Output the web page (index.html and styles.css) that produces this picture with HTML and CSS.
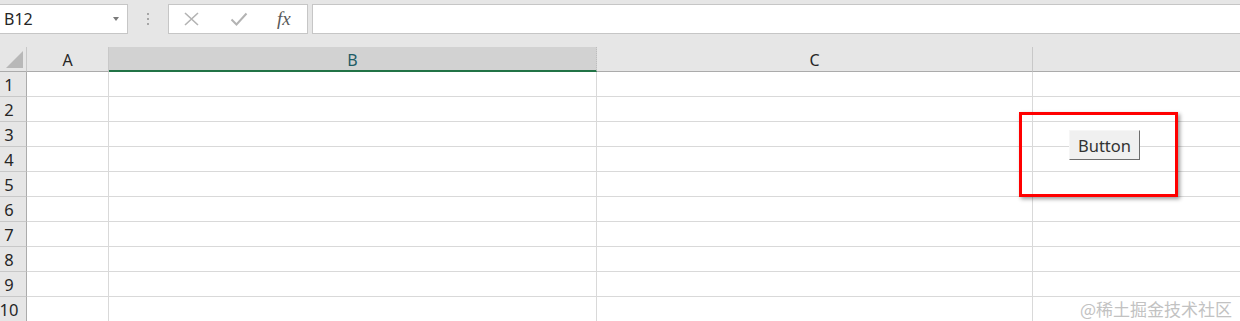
FILE: index.html
```html
<!DOCTYPE html>
<html>

<head>
    <meta name="viewport" content="width=device-width, initial-scale=1">
    <title>Sheet</title>
    <link rel="stylesheet" href="styles.css">
</head>

<body>
    <div class="toolbar">
        <div class="name-box">
            <span class="name-text">B12</span>
            <span class="name-arrow"></span>
        </div>
        <div class="grip">
            <i></i><i></i><i></i>
        </div>
        <div class="fx-box">
            <svg class="fx-icon" width="18" height="14" viewBox="0 0 18 14">
                <path d="M2 1 L15 13 M15 1 L2 13" stroke="#b3b3b3" stroke-width="1.6" fill="none" />
            </svg>
            <svg class="fx-icon" width="18" height="14" viewBox="0 0 18 14">
                <path d="M1.5 7.5 L6.5 12.5 L16.5 1.5" stroke="#b3b3b3" stroke-width="2" fill="none" />
            </svg>
            <span class="fx-label">fx</span>
        </div>
        <div class="formula-input"></div>
    </div>

    <div class="sheet">
        <div class="corner"><span class="corner-mark"></span></div>
        <div class="col-head">A</div>
        <div class="col-head selected">B</div>
        <div class="col-head">C</div>
        <div class="col-head last"></div>

        <div class="row-head">1</div><div class="cell"></div><div class="cell"></div><div class="cell"></div><div class="cell last"></div>
        <div class="row-head">2</div><div class="cell"></div><div class="cell"></div><div class="cell"></div><div class="cell last"></div>
        <div class="row-head">3</div><div class="cell"></div><div class="cell"></div><div class="cell"></div><div class="cell last"></div>
        <div class="row-head">4</div><div class="cell"></div><div class="cell"></div><div class="cell"></div><div class="cell last"></div>
        <div class="row-head">5</div><div class="cell"></div><div class="cell"></div><div class="cell"></div><div class="cell last"></div>
        <div class="row-head">6</div><div class="cell"></div><div class="cell"></div><div class="cell"></div><div class="cell last"></div>
        <div class="row-head">7</div><div class="cell"></div><div class="cell"></div><div class="cell"></div><div class="cell last"></div>
        <div class="row-head">8</div><div class="cell"></div><div class="cell"></div><div class="cell"></div><div class="cell last"></div>
        <div class="row-head">9</div><div class="cell"></div><div class="cell"></div><div class="cell"></div><div class="cell last"></div>
        <div class="row-head">10</div><div class="cell"></div><div class="cell"></div><div class="cell"></div><div class="cell last"></div>
    </div>

    <!-- floating shape over the cells -->
    <div class="highlight">
        <button class="sheet-button" type="button">Button</button>
    </div>

    <div class="watermark">@稀土掘金技术社区</div>
</body>

</html>
```

FILE: styles.css
```css
* {
    box-sizing: border-box;
}

body {
    margin: 0;
    overflow: hidden;
    position: relative;
    width: 1240px;
    height: 321px;
    background: #ffffff;
    font-family: "Noto Sans", "Open Sans", sans-serif;
    color: #262626;
}

.toolbar {
    display: flex;
    align-items: flex-start;
    height: 47px;
    padding-top: 4px;
    background: #e6e6e6;
}

.name-box {
    display: flex;
    align-items: center;
    justify-content: space-between;
    width: 128px;
    height: 30px;
    padding: 0 8px 0 4px;
    background: #ffffff;
    border: 1px solid #c6c6c6;
    border-left: none;
}

.name-text {
    font-size: 16px;
    color: #262626;
}

.name-arrow {
    width: 0;
    height: 0;
    border-left: 3.5px solid transparent;
    border-right: 3.5px solid transparent;
    border-top: 4px solid #7a7a7a;
}

.grip {
    display: flex;
    flex-direction: column;
    align-items: center;
    justify-content: center;
    gap: 3px;
    width: 40px;
    height: 30px;
}

.grip i {
    display: block;
    width: 2px;
    height: 2px;
    background: #a6a6a6;
}

.fx-box {
    display: flex;
    align-items: center;
    width: 140px;
    height: 30px;
    padding-left: 14px;
    gap: 29px;
    background: #ffffff;
    border: 1px solid #c6c6c6;
}

.fx-label {
    font-family: "Liberation Serif", "DejaVu Serif", serif;
    font-style: italic;
    font-size: 19px;
    color: #5a5a5a;
    margin-left: 0;
}

.formula-input {
    flex: 1;
    height: 30px;
    margin-left: 4px;
    background: #ffffff;
    border: 1px solid #c6c6c6;
    border-right: none;
}

.sheet {
    display: grid;
    grid-template-columns: 27px 82px 488px 436px 1fr;
    grid-auto-rows: 25px;
    height: 274px;
    overflow: hidden;
}

.corner {
    position: relative;
    background: #e6e6e6;
    border-right: 1px solid #c8c8c8;
    border-bottom: 1px solid #ababab;
}

.corner-mark {
    position: absolute;
    right: 3px;
    bottom: 3px;
    width: 0;
    height: 0;
    border-left: 17px solid transparent;
    border-bottom: 17px solid #b8b8b8;
}

.col-head {
    display: flex;
    align-items: center;
    justify-content: center;
    padding-top: 2px;
    font-size: 16px;
    color: #262626;
    background: #e6e6e6;
    border-right: 1px solid #c8c8c8;
    border-bottom: 1px solid #ababab;
}

.col-head.selected {
    background: #d2d2d2;
    color: #1e5c66;
    border-right: 1px dotted #bdbdbd;
    border-bottom: 2px solid #217346;
}

.col-head.last {
    border-right: none;
}

.row-head {
    display: flex;
    align-items: center;
    justify-content: center;
    padding-right: 8px;
    padding-top: 1px;
    font-size: 16.5px;
    color: #262626;
    background: #e6e6e6;
    border-right: 1px solid #ababab;
    border-bottom: 1px solid #c8c8c8;
}

.cell {
    border-right: 1px solid #d9d9d9;
    border-bottom: 1px solid #d9d9d9;
}

.cell.last {
    border-right: none;
}

.highlight {
    position: absolute;
    left: 1019px;
    top: 112px;
    width: 159px;
    height: 85px;
    border: 3px solid #ff0000;
    box-shadow: 2px 2px 4px rgba(0, 0, 0, 0.4);
}

.sheet-button {
    position: absolute;
    left: 47px;
    top: 15px;
    width: 71px;
    height: 30px;
    padding: 0;
    font-family: "Noto Sans", "Open Sans", sans-serif;
    font-size: 16.5px;
    color: #333333;
    background: #f0f0f0;
    border: 1px solid #f0f0f0;
    border-right-color: #6d6d6d;
    border-bottom-color: #6d6d6d;
    border-top-color: #f6f6f6;
    border-left-color: #f6f6f6;
}

.watermark {
    position: absolute;
    right: 8px;
    bottom: 2px;
    font-family: "Noto Sans CJK SC", sans-serif;
    font-size: 17px;
    line-height: 20px;
    color: #c2c2c2;
}
```
